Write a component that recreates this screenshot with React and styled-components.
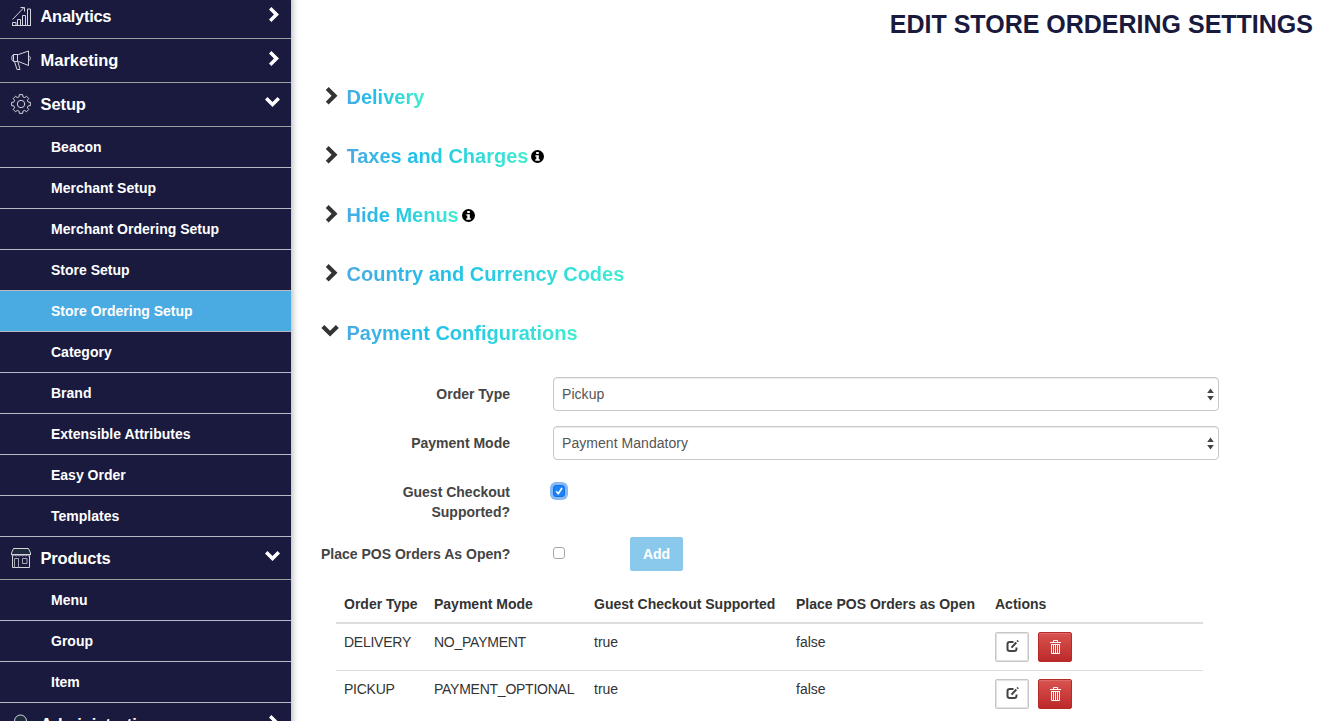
import React from "react";

import styled, { createGlobalStyle } from "styled-components";

const GlobalStyle = createGlobalStyle`
  * {
    box-sizing: border-box;
  }

  body {
    margin: 0;
    background-color: #fff;
    color: #333;
    font-family: "Liberation Sans", Arial, sans-serif;
    font-size: 14px;
    line-height: 20px;
    overflow: hidden;
  }
`;

const Page = styled.div`
  display: flex;
  height: 721px;
  overflow: hidden;
`;

const Sidebar = styled.nav`
  background-color: #191a3e;
  box-shadow: 0 0 8px rgba(0, 0, 0, 0.4);
  flex: none;
  height: 740px;
  margin-top: -5px;
  width: 291px;
`;

const Section = styled.div`
  align-items: center;
  border-bottom: 1px solid #98a29f;
  color: #fff;
  display: flex;
  font-size: 16.5px;
  font-weight: bold;
  height: ${(props) => (props.$short ? 43 : 44)}px;
  padding: 0 11px ${(props) => (props.$short ? 0 : 2)}px;
`;

const SectionIcon = styled.svg`
  fill: none;
  flex: none;
  height: 20px;
  margin-right: 9.5px;
  stroke: #d4d5dc;
  stroke-width: 1;
  width: 20px;
`;

const SectionName = styled.span`
  flex: 1;
  letter-spacing: ${(props) => props.$spacing || 0}px;
`;

const SectionArrow = styled.svg`
  fill: #fff;
  margin-right: ${(props) => (props.$open ? 0 : 1)}px;
  margin-bottom: ${(props) => (props.$open ? 4 : 3)}px;
`;

const SubItem = styled.div`
  background-color: ${(props) => (props.$active ? "#4aabe2" : "transparent")};
  border-bottom: 1px solid #b9bbc4;
  color: #fff;
  font-weight: bold;
  height: 41px;
  line-height: 40px;
  padding-left: 51px;
`;

const Main = styled.main`
  flex: 1;
  padding: 9px 25px 0 30px;
`;

const Title = styled.h1`
  color: #191a3e;
  font-size: 25px;
  font-weight: bold;
  line-height: 30px;
  margin: 0 0 28px;
  text-align: right;
`;

const Panel = styled.div`
  align-items: center;
  display: flex;
  height: 59px;
`;

const PanelArrow = styled.svg`
  fill: #333;
  flex: none;
  height: 18px;
  margin: 0 7.5px ${(props) => (props.$open ? 3 : 1)}px 0;
  width: 18px;
`;

const PanelName = styled.h2`
  background: linear-gradient(90deg, #4aabe2 0%, #1fc0ea 35%, #40ecd0 100%);
  background-clip: text;
  -webkit-background-clip: text;
  color: transparent;
  font-size: 20px;
  font-weight: bold;
  line-height: 26px;
  margin: 0;
`;

const Info = styled.svg`
  height: 13px;
  margin: 2px 0 0 3px;
  width: 13px;
`;

const Form = styled.div`
  display: flex;
  flex-direction: column;
  gap: 15px;
  padding-top: 15px;
`;

const Field = styled.div`
  display: flex;
`;

const Label = styled.label`
  color: #444;
  font-weight: bold;
  padding-top: 7px;
  text-align: right;
  white-space: pre;
  width: 189px;
`;

const Select = styled.div`
  align-items: center;
  border: 1px solid #c8c8c8;
  border-radius: 4px;
  box-shadow: inset 0 1px 1px rgba(0, 0, 0, 0.075);
  color: #555;
  display: flex;
  height: 34px;
  justify-content: space-between;
  letter-spacing: 0.05px;
  margin-left: 43px;
  padding: 0 4px 0 8px;
  width: 666px;
`;

const Checkbox = styled.span`
  background-color: ${(props) => (props.$checked ? "#1a82fb" : "#fff")};
  border: 1px solid ${(props) => (props.$checked ? "#1670e0" : "#a6a6a6")};
  border-radius: 3px;
  box-shadow: ${(props) => (props.$checked ? "0 0 0 3px #86b9f6" : "none")};
  display: flex;
  height: 12px;
  margin: 10px 0 0 43px;
  width: 12px;
`;

const AddButton = styled.button`
  background-color: #8ac9ec;
  border: 0;
  border-radius: 2px;
  color: #fff;
  font: bold 14px "Liberation Sans", Arial, sans-serif;
  height: 34px;
  margin-left: 65px;
  padding: 0;
  width: 53px;
`;

const Table = styled.table`
  border-collapse: separate;
  border-spacing: 0;
  margin: 15px 0 0 15px;
  table-layout: fixed;
  width: 867px;
`;

const HeadCell = styled.th`
  border-bottom: 2px solid #ddd;
  padding: 8px;
  text-align: left;
  white-space: nowrap;
  width: ${(props) => props.$width}px;
`;

const Cell = styled.td`
  border-top: ${(props) => (props.$first ? "0" : "1px solid #ddd")};
  letter-spacing: ${(props) => (props.$code ? -0.25 : 0)}px;
  padding: 8px;
  vertical-align: top;
  white-space: nowrap;
`;

const Actions = styled.div`
  display: flex;
  gap: 9px;
`;

const IconButton = styled.button`
  align-items: center;
  background: ${(props) =>
    props.$danger ? "linear-gradient(#d9534f, #bc2a2a)" : "#fff"};
  border: 1px solid ${(props) => (props.$danger ? "#b52b27" : "#c6c6c6")};
  border-radius: 2px;
  box-shadow: ${(props) =>
    props.$danger
      ? "inset 0 1px 0 rgba(255, 255, 255, 0.15)"
      : "inset 0 0 1px 1px #e2e2e2"};
  display: flex;
  height: 30px;
  justify-content: center;
  padding: 0 0 1px;
  width: 34px;
`;

// eight rounded teeth around the centre of a 20x20 box
const gearPath = () => {
  const points = [];
  for (let tooth = 0; tooth < 8; tooth++) {
    [
      [-15, 7.4],
      [-10, 9.5],
      [10, 9.5],
      [15, 7.4],
    ].forEach(([offset, radius]) => {
      const angle = ((tooth * 45 + offset) * Math.PI) / 180;
      const x = 10 + radius * Math.sin(angle);
      const y = 10 - radius * Math.cos(angle);
      points.push(`${x.toFixed(2)} ${y.toFixed(2)}`);
    });
  }
  return `M${points.join("L")}z`;
};

const icons = {
  analytics: (
    <>
      <path d="M1.500 19.500v-3h3.500v3M6.500 19.500v-6h3v6M11.500 19.500v-10h3v10M16.500 19.500V3h3v16.500M1 19.500h19" />
      <path d="M1.500 13.500 12.500 2M9.500 1.500h4v4" />
    </>
  ),
  marketing: (
    <path
      d="M2.500 4.500h5L17.500 1v14.500L7.500 11.500h-5zM6.500 4.500v7M2.500 4.500C.2 5.500.2 10.500 2.500 11.500M17.500 6c2.500 0 2.500 4.500 0 4.500M3.500 11.500l2.500 8h3l-2-7.500"
      strokeLinejoin="round"
    />
  ),
  setup: (
    <>
      <path d={gearPath()} strokeLinejoin="round" />
      <circle cx="10" cy="10" r="3.700" />
    </>
  ),
  products: (
    <>
      <path d="M2.500 .5h15l2 4.500v1.500H.5V5z" fill="#1d2c3c" />
      <path d="M.5 6c0 2.500 3.200 2.500 3.200 0 0 2.500 3.100 2.500 3.100 0 0 2.500 3.200 2.500 3.200 0 0 2.500 3.200 2.500 3.200 0 0 2.500 3.100 2.500 3.100 0 0 2.500 3.200 2.500 3.200 0M1.500 8v11.500h17V8" />
      <path d="M3.500 19.500v-9h4v9M11.500 10.500h4.500v5h-4.500z" stroke="#a5a9b4" />
    </>
  ),
  admin: (
    <path d="M15.500 7a6 6 0 1 0-12 0c0 3 2 6 6 6s6-3 6-6zM.5 20c0-5 4-7 9-7s9 2 9 7" fill="#1d2c3c" />
  ),
};

const menu = [
  { name: "Analytics", icon: "analytics", spacing: -0.3 },
  { name: "Marketing", icon: "marketing" },
  {
    name: "Setup",
    icon: "setup",
    spacing: -0.1,
    items: [
      "Beacon",
      "Merchant Setup",
      "Merchant Ordering Setup",
      "Store Setup",
      "Store Ordering Setup",
      "Category",
      "Brand",
      "Extensible Attributes",
      "Easy Order",
      "Templates",
    ],
  },
  {
    name: "Products",
    icon: "products",
    spacing: -0.2,
    short: true,
    items: ["Menu", "Group", "Item"],
  },
  { name: "Administration", icon: "admin" },
];

const panels = [
  { name: "Delivery" },
  { name: "Taxes and Charges", info: true },
  { name: "Hide Menus", info: true },
  { name: "Country and Currency Codes" },
  { name: "Payment Configurations", open: true },
];

const columns = [
  ["Order Type", 90],
  ["Payment Mode", 160],
  ["Guest Checkout Supported", 202],
  ["Place POS Orders as Open", 199],
  ["Actions", 216],
];

const rows = [
  ["DELIVERY", "NO_PAYMENT", "true", "false"],
  ["PICKUP", "PAYMENT_OPTIONAL", "true", "false"],
];

const RIGHT = "M7.600 0 16.500 8.800 7.600 17.600 4.800 14.800 10.600 8.800 4.800 2.900z";
const DOWN = "M.4 5.900 3.300 3 9.100 8.800 14.900 3 17.800 5.900 9.100 14.600z";

function Sorter() {
  return (
    <svg width="7" height="13" fill="#444">
      <path d="M3.500 .5 6.800 5H.2zM.2 8h6.600l-3.300 4.500z" />
    </svg>
  );
}

function App() {
  return (
    <>
      <GlobalStyle />
      <Page>
        <Sidebar>
          {menu.map(({ name, icon, spacing, short, items }) => (
            <React.Fragment key={name}>
              <Section $short={short}>
                <SectionIcon viewBox="0 0 20 20">{icons[icon]}</SectionIcon>
                <SectionName $spacing={spacing}>{name}</SectionName>
                {items ? (
                  <SectionArrow $open width="15" height="10" viewBox="0.400 3 17.400 11.600">
                    <path d={DOWN} />
                  </SectionArrow>
                ) : (
                  <SectionArrow width="10" height="15" viewBox="4.800 0 11.700 17.600">
                    <path d={RIGHT} />
                  </SectionArrow>
                )}
              </Section>
              {items &&
                items.map((item) => (
                  <SubItem key={item} $active={item === "Store Ordering Setup"}>
                    {item}
                  </SubItem>
                ))}
            </React.Fragment>
          ))}
        </Sidebar>
        <Main>
          <Title>EDIT STORE ORDERING SETTINGS</Title>
          {panels.map(({ name, info, open }) => (
            <Panel key={name}>
              <PanelArrow $open={open} viewBox="0 0 18 18">
                <path d={open ? DOWN : RIGHT} />
              </PanelArrow>
              <PanelName>{name}</PanelName>
              {info && (
                <Info viewBox="0 0 13 13">
                  <circle cx="6.500" cy="6.500" r="6.500" fill="#000" />
                  <path d="M5.200 2h2.600v2H5.200zM4.300 5.200h3.500v4h1v1.500H4.300V9.200h1V6.600h-1z" fill="#fff" />
                </Info>
              )}
            </Panel>
          ))}
          <Form>
            <Field>
              <Label>Order Type</Label>
              <Select>
                Pickup
                <Sorter />
              </Select>
            </Field>
            <Field>
              <Label>Payment Mode</Label>
              <Select>
                Payment Mandatory
                <Sorter />
              </Select>
            </Field>
            <Field>
              <Label>{"Guest Checkout\nSupported?"}</Label>
              <Checkbox $checked>
                <svg width="10" height="10" fill="none" stroke="#fff" strokeWidth="1.600">
                  <path d="M2.200 5.200 4.300 7.600 8 2" />
                </svg>
              </Checkbox>
            </Field>
            <Field>
              <Label>Place POS Orders As Open?</Label>
              <Checkbox />
              <AddButton>Add</AddButton>
            </Field>
          </Form>
          <Table>
            <thead>
              <tr>
                {columns.map(([name, width]) => (
                  <HeadCell key={name} $width={width}>
                    {name}
                  </HeadCell>
                ))}
              </tr>
            </thead>
            <tbody>
              {rows.map((row, index) => (
                <tr key={row[0]}>
                  {row.map((value, i) => (
                    <Cell key={i} $first={index === 0} $code={i < 2}>
                      {value}
                    </Cell>
                  ))}
                  <Cell $first={index === 0}>
                    <Actions>
                      <IconButton aria-label="Edit">
                        <svg width="13" height="13" fill="none" stroke="#444">
                          <path d="M7.500 2H3.800Q1.500 2 1.500 4.200v4.600q0 2.200 2.300 2.200h4.400q2.300 0 2.300-2.200V7.500" strokeWidth="2" />
                          <path d="M5.500 7.600 10.300 2.500M11.200 1.600l1-1" strokeWidth="2" />
                        </svg>
                      </IconButton>
                      <IconButton $danger aria-label="Delete">
                        <svg width="11" height="14" fill="none" stroke="#fff">
                          <path d="M0 2.500h11M3.500 2.500v-2h4v2M1.500 4v9.500h8V4M1 4.500h9M3.500 5v8M5.500 5v8M7.500 5v8" />
                        </svg>
                      </IconButton>
                    </Actions>
                  </Cell>
                </tr>
              ))}
            </tbody>
          </Table>
        </Main>
      </Page>
    </>
  );
}

export default App;
